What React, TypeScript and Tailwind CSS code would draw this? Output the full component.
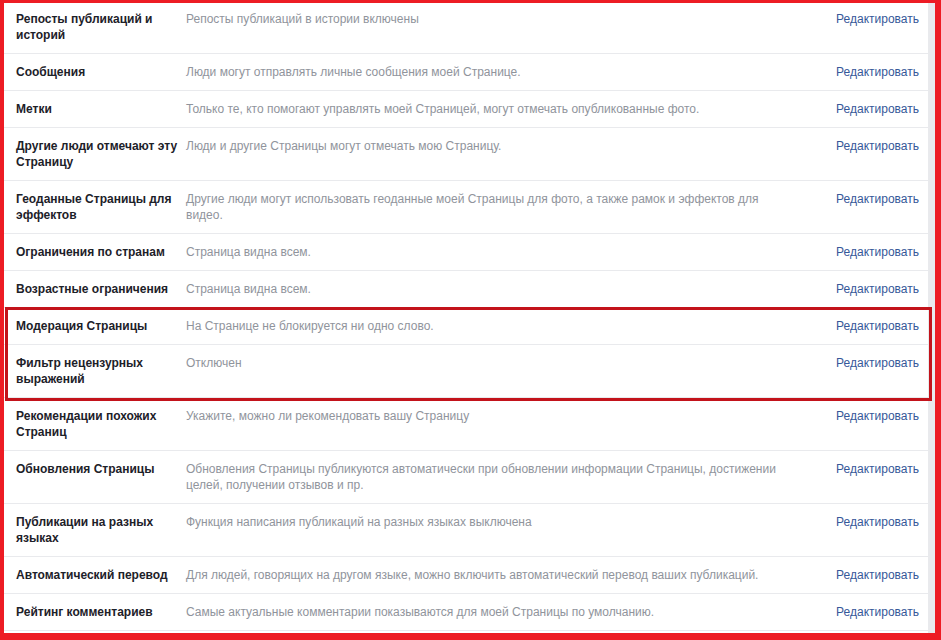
import React from 'react';

type Row = { title: string; text: string };

const rows: Row[] = [
    { title: 'Репосты публикаций и историй', text: 'Репосты публикаций в истории включены' },
    { title: 'Сообщения', text: 'Люди могут отправлять личные сообщения моей Странице.' },
    { title: 'Метки', text: 'Только те, кто помогают управлять моей Страницей, могут отмечать опубликованные фото.' },
    { title: 'Другие люди отмечают эту Страницу', text: 'Люди и другие Страницы могут отмечать мою Страницу.' },
    { title: 'Геоданные Страницы для эффектов', text: 'Другие люди могут использовать геоданные моей Страницы для фото, а также рамок и эффектов для видео.' },
    { title: 'Ограничения по странам', text: 'Страница видна всем.' },
    { title: 'Возрастные ограничения', text: 'Страница видна всем.' },
];

const moderated: Row[] = [
    { title: 'Модерация Страницы', text: 'На Странице не блокируется ни одно слово.' },
    { title: 'Фильтр нецензурных выражений', text: 'Отключен' },
];

const rest: Row[] = [
    { title: 'Рекомендации похожих Страниц', text: 'Укажите, можно ли рекомендовать вашу Страницу' },
    { title: 'Обновления Страницы', text: 'Обновления Страницы публикуются автоматически при обновлении информации Страницы, достижении целей, получении отзывов и пр.' },
    { title: 'Публикации на разных языках', text: 'Функция написания публикаций на разных языках выключена' },
    { title: 'Автоматический перевод', text: 'Для людей, говорящих на другом языке, можно включить автоматический перевод ваших публикаций.' },
    { title: 'Рейтинг комментариев', text: 'Самые актуальные комментарии показываются для моей Страницы по умолчанию.' },
];

function SettingRow({ row, first }: { row: Row; first?: boolean }) {
    return (
        <div className={`flex border-b border-[#e9eaed] pl-3 pb-[10px] ${first ? 'pt-[8px]' : 'pt-[10px]'}`}>
            <div className="w-[170px] shrink-0 pr-[6px] font-bold text-[#1d2129]">{row.title}</div>
            <div className="w-[604px] shrink-0 text-[#90949c]">{row.text}</div>
            <div className="flex-1 pr-[9px] text-right">
                <a href="#" className="text-[#365899]">Редактировать</a>
            </div>
        </div>
    );
}

export default function App() {
    return (
        <div
            className="w-[941px] h-[640px] bg-[#ed1c24] pt-[3px] pl-[4px] pr-[6px] pb-[7px] flex text-[12px] leading-4"
            style={{ fontFamily: '"Liberation Sans", Arial, sans-serif' }}
        >
            {/* Page Content */}
            <div className="flex-1 bg-white">
                {rows.map((r, i) => (
                    <SettingRow key={r.title} row={r} first={i === 0} />
                ))}
                <div className="relative">
                    {moderated.map((r) => (
                        <SettingRow key={r.title} row={r} />
                    ))}
                    {/* annotation frame */}
                    <div className="absolute -top-[1px] -bottom-[3px] left-[1px] -right-[4px] border-[3px] border-[#c3131b] pointer-events-none"></div>
                </div>
                {rest.map((r) => (
                    <SettingRow key={r.title} row={r} />
                ))}
            </div>
            <div className="w-[7px] bg-[#e9eaed]"></div>
        </div>
    );
}
